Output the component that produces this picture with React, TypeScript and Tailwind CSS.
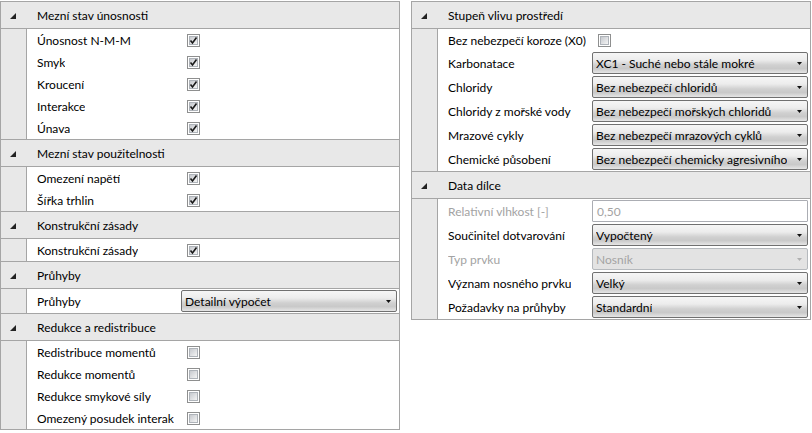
import React from 'react';

function Triangle() {
    return (
        <svg width="6" height="6" viewBox="0 0 6 6" className="ml-[9px]">
            <polygon points="6,0 6,6 0,6" fill="#222" />
        </svg>
    );
}

function Header({ title }: { title: string }) {
    return (
        <div className="flex h-[28px] items-center border-y border-[#a5a5a5] bg-[#e8e8e8]">
            <div className="flex w-[26px] items-center pt-[1px]">
                <Triangle />
            </div>
            <span className="pl-[10px] pt-[2px]">{title}</span>
        </div>
    );
}

function Row({
    label,
    disabled,
    tall,
    children,
}: {
    label: string;
    disabled?: boolean;
    tall?: boolean;
    children: React.ReactNode;
}) {
    return (
        <div className={`flex ${tall ? 'h-[24px]' : 'h-[22px]'} items-stretch`}>
            <div className="w-[26px] shrink-0 border-r border-[#a5a5a5] bg-[#e8e8e8]" />
            <div
                className={`flex w-[154px] shrink-0 items-center pl-[10px] pt-[2px] ${
                    disabled ? 'text-[#a3a3a3]' : 'text-black'
                }`}
            >
                <span className="max-w-[140px] overflow-hidden whitespace-nowrap">{label}</span>
            </div>
            <div className="flex flex-1 items-center">{children}</div>
        </div>
    );
}

function CheckBox({ checked }: { checked?: boolean }) {
    return (
        <div className="ml-[6px] flex h-[13px] w-[13px] items-center justify-center border border-[#8e8f8f] bg-white">
            <div className="relative h-[9px] w-[9px] border border-[#aeb3b9] bg-[linear-gradient(135deg,#c6c9ce,#f4f4f4)]">
                {checked && (
                    <svg
                        width="9"
                        height="9"
                        viewBox="0 0 9 9"
                        className="absolute -left-[1px] -top-[1px]"
                    >
                        <path
                            d="M1.5 4.5 L3.5 7 L7.5 1.5"
                            stroke="#1a1a1a"
                            strokeWidth="1.6"
                            fill="none"
                        />
                    </svg>
                )}
            </div>
        </div>
    );
}

function Combo({ value, disabled }: { value: string; disabled?: boolean }) {
    return (
        <div
            className={`flex h-[22px] w-[216px] items-center justify-between gap-[4px] rounded-[2px] border pl-[3px] pr-[5px] ${
                disabled
                    ? 'border-[#b5b9bd] bg-[#e3e3e3] text-[#a3a3a3]'
                    : 'border-[#707070] bg-[linear-gradient(#f6f6f6_0%,#ececec_35%,#d0d0d0_60%,#c9c9c9_78%,#e6e6e6_100%)] text-black'
            }`}
        >
            <span className="overflow-hidden whitespace-nowrap pt-[1px]">{value}</span>
            <svg width="5" height="3" viewBox="0 0 5 3" className="shrink-0">
                <polygon points="0,0 5,0 2.5,3" fill={disabled ? '#b0b0b0' : '#111'} />
            </svg>
        </div>
    );
}

function TextBox({ value }: { value: string }) {
    return (
        <div className="flex h-[22px] w-[216px] items-center rounded-[1px] border border-[#abadb3] bg-white pl-[4px] pt-[1px] text-[#a3a3a3]">
            {value}
        </div>
    );
}

export default function App() {
    return (
        <div className="flex h-[433px] w-[812px] gap-[11px] bg-white pt-[1px] font-['Lato',sans-serif] text-[12px] leading-[16px] text-black">
            <div className="w-[400px] self-start border-x border-b border-[#a5a5a5]">
                <Header title="Mezní stav únosnosti" />
                <Row label="Únosnost N-M-M">
                    <CheckBox checked />
                </Row>
                <Row label="Smyk">
                    <CheckBox checked />
                </Row>
                <Row label="Kroucení">
                    <CheckBox checked />
                </Row>
                <Row label="Interakce">
                    <CheckBox checked />
                </Row>
                <Row label="Únava">
                    <CheckBox checked />
                </Row>
                <Header title="Mezní stav použitelnosti" />
                <Row label="Omezení napětí">
                    <CheckBox checked />
                </Row>
                <Row label="Šířka trhlin">
                    <CheckBox checked />
                </Row>
                <Header title="Konstrukční zásady" />
                <Row label="Konstrukční zásady">
                    <CheckBox checked />
                </Row>
                <Header title="Průhyby" />
                <Row label="Průhyby" tall>
                    <Combo value="Detailní výpočet" />
                </Row>
                <Header title="Redukce a redistribuce" />
                <Row label="Redistribuce momentů">
                    <CheckBox />
                </Row>
                <Row label="Redukce momentů">
                    <CheckBox />
                </Row>
                <Row label="Redukce smykové síly">
                    <CheckBox />
                </Row>
                <Row label="Omezený posudek interak">
                    <CheckBox />
                </Row>
            </div>
            <div className="w-[400px] self-start border-x border-b border-[#a5a5a5]">
                <Header title="Stupeň vlivu prostředí" />
                <Row label="Bez nebezpečí koroze (X0)">
                    <CheckBox />
                </Row>
                <Row label="Karbonatace" tall>
                    <Combo value="XC1 - Suché nebo stále mokré" />
                </Row>
                <Row label="Chloridy" tall>
                    <Combo value="Bez nebezpečí chloridů" />
                </Row>
                <Row label="Chloridy z mořské vody" tall>
                    <Combo value="Bez nebezpečí mořských chloridů" />
                </Row>
                <Row label="Mrazové cykly" tall>
                    <Combo value="Bez nebezpečí mrazových cyklů" />
                </Row>
                <Row label="Chemické působení" tall>
                    <Combo value="Bez nebezpečí chemicky agresivního" />
                </Row>
                <Header title="Data dílce" />
                <Row label="Relativní vlhkost [-]" disabled tall>
                    <TextBox value="0,50" />
                </Row>
                <Row label="Součinitel dotvarování" tall>
                    <Combo value="Vypočtený" />
                </Row>
                <Row label="Typ prvku" disabled tall>
                    <Combo value="Nosník" disabled />
                </Row>
                <Row label="Význam nosného prvku" tall>
                    <Combo value="Velký" />
                </Row>
                <Row label="Požadavky na průhyby" tall>
                    <Combo value="Standardní" />
                </Row>
            </div>
        </div>
    );
}
